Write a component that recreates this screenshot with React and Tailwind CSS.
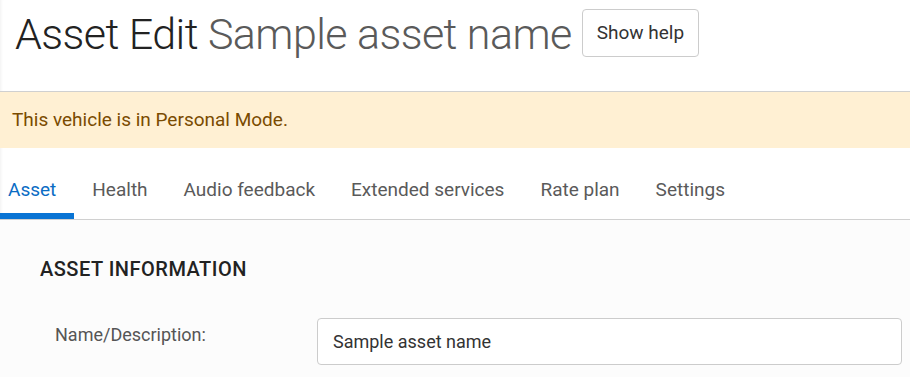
const tabs = ['Asset', 'Health', 'Audio feedback', 'Extended services', 'Rate plan', 'Settings']

export default function App() {
  return (
    <div className="w-[910px] h-[377px] overflow-hidden bg-white font-['Roboto',sans-serif] shadow-[inset_3px_0_3px_-2px_rgba(0,0,0,0.06)]">
      {/* Page header */}
      <div className="h-[92px] flex items-start pt-[9px] pl-[15px] border-b border-[#d0d0d0]">
        <h1 className="text-[43px] leading-[48px] pt-[1px] font-light text-[#222] tracking-[-0.55px]">
          Asset Edit <span className="text-[#5a5a5a]">Sample asset name</span>
        </h1>
        <button className="ml-[10px] h-[48px] px-[14px] border border-[#ccc] rounded-[4px] bg-white text-[19px] text-[#333]">
          Show help
        </button>
      </div>

      {/* Alert */}
      <div className="h-[56px] bg-[#fff0d3] flex items-center pl-[12px] text-[19px] text-[#7a4b00]">
        This vehicle is in Personal Mode.
      </div>

      {/* Tabs */}
      <div className="h-[72px] flex items-end border-b border-[#d0d0d0]">
        {tabs.map((t, i) => (
          <div
            key={t}
            className={
              'h-[58px] flex items-start pt-[18px] text-[19px] leading-[22px] ' +
              (i === 0 ? 'pl-[8px] pr-[18px] text-[#0a6cc4] border-b-[6px] border-[#0a74d4]' : 'px-[18px] text-[#5a5a5a]')
            }
          >
            {t}
          </div>
        ))}
      </div>

      {/* Content */}
      <div className="bg-[#fcfcfc] h-full pl-[40px] pt-[37px]">
        <h2 className="text-[20px] font-medium text-[#222] leading-[24px] tracking-[0.5px]">ASSET INFORMATION</h2>
        <div className="flex items-center mt-[37px] pl-[15px] pr-[8px]">
          <label className="w-[262px] text-[18px] text-[#555] -mt-[14px]">Name/Description:</label>
          <div className="flex-1 h-[47px] border border-[#ccc] rounded-[4px] bg-white flex items-center pl-[15px] text-[18px] text-[#333]">
            Sample asset name
          </div>
        </div>
      </div>
    </div>
  )
}
